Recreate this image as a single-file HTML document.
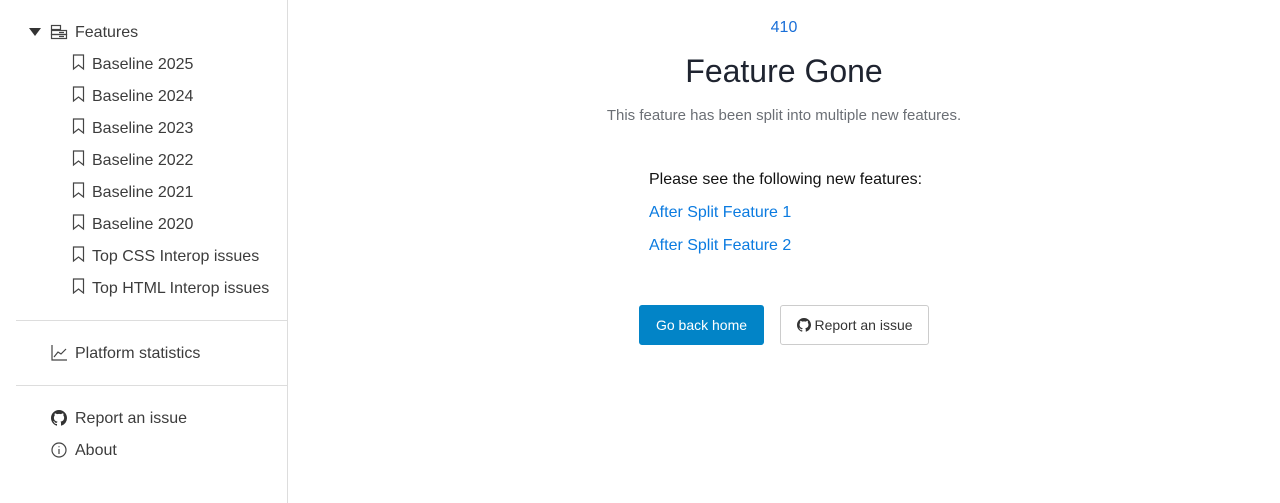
<!DOCTYPE html>
<html><head><style>
body{margin:0;width:1280px;height:503px;font-family:"Liberation Sans",sans-serif;background:#fff;position:relative;overflow:hidden;color:#333}
.a{position:absolute;white-space:nowrap}
.side{position:absolute;left:0;top:0;width:287px;height:503px;border-right:1px solid #ddd}
.s{font-size:16px;color:#3c3c3c;line-height:20px}
.hr{position:absolute;left:16px;width:271px;height:1px;background:#ddd}
svg{position:absolute}
</style></head><body>
<div class="side"></div>
<svg style="left:29px;top:28px" width="12" height="9"><path d="M0 0H12L6 8Z" fill="#333"/></svg>
<svg style="left:50px;top:24px" width="18" height="16" fill="none" stroke="#444" stroke-width="1.2"><rect x="1.5" y="1.5" width="9" height="4"/><rect x="1.5" y="6.5" width="15" height="4"/><rect x="1.5" y="10.5" width="15" height="4"/><path d="M9 8.5H14M9 12.5H14"/></svg>
<div class="a s" style="left:75px;top:23px">Features</div>
<div class="a s" style="left:92px;top:55px">Baseline 2025</div>
<div class="a s" style="left:92px;top:87px">Baseline 2024</div>
<div class="a s" style="left:92px;top:119px">Baseline 2023</div>
<div class="a s" style="left:92px;top:151px">Baseline 2022</div>
<div class="a s" style="left:92px;top:183px">Baseline 2021</div>
<div class="a s" style="left:92px;top:215px">Baseline 2020</div>
<div class="a s" style="left:92px;top:247px">Top CSS Interop issues</div>
<div class="a s" style="left:92px;top:279px">Top HTML Interop issues</div>
<svg style="left:72px;top:54px" width="14" height="240" fill="none" stroke="#444" stroke-width="1.2">
<g id="b"><path d="M1.5 1H11.5V15L6.5 11L1.5 15Z"/></g>
<use href="#b" y="32"/><use href="#b" y="64"/><use href="#b" y="96"/><use href="#b" y="128"/><use href="#b" y="160"/><use href="#b" y="192"/><use href="#b" y="224"/>
</svg>
<div class="hr" style="top:320px"></div>
<svg style="left:51px;top:345px" width="17" height="16" fill="none" stroke="#444" stroke-width="1.2"><path d="M1 0V15H16"/><path d="M3 12L7 7L10 9L15 4"/></svg>
<div class="a s" style="left:75px;top:344px">Platform statistics</div>
<div class="hr" style="top:385px"></div>
<svg style="left:51px;top:410px" width="16" height="16" viewBox="0 0 16 16"><path fill="#333" d="M8 0C3.58 0 0 3.58 0 8c0 3.54 2.29 6.53 5.47 7.59.4.07.55-.17.55-.38v-1.34c-2.23.48-2.7-1.07-2.7-1.07-.36-.92-.89-1.17-.89-1.17-.73-.5.06-.49.06-.49.8.06 1.23.83 1.23.83.72 1.23 1.87.87 2.33.67.07-.52.28-.87.51-1.07-1.78-.2-3.64-.89-3.64-3.95 0-.87.31-1.59.82-2.15-.08-.2-.36-1.02.08-2.12 0 0 .67-.21 2.2.82a7.6 7.6 0 0 1 4 0c1.53-1.04 2.2-.82 2.2-.82.44 1.1.16 1.92.08 2.12.51.56.82 1.27.82 2.15 0 3.07-1.87 3.75-3.65 3.95.29.25.54.73.54 1.48v2.2c0 .21.15.46.55.38A8.01 8.01 0 0 0 16 8c0-4.42-3.58-8-8-8z"/></svg>
<div class="a s" style="left:75px;top:409px">Report an issue</div>
<svg style="left:51px;top:442px" width="16" height="16" fill="none" stroke="#444" stroke-width="1.2"><circle cx="8" cy="8" r="7"/><path d="M8 7V12M8 4.2V5.2"/></svg>
<div class="a s" style="left:75px;top:441px">About</div>

<div class="a" style="left:288px;width:992px;text-align:center;top:19px;font-size:16px;color:#1a6fd8">410</div>
<div class="a" style="left:288px;width:992px;text-align:center;top:53px;font-size:32px;color:#1f2430">Feature Gone</div>
<div class="a" style="left:288px;width:992px;text-align:center;top:107px;font-size:15px;color:#6b6f75">This feature has been split into multiple new features.</div>
<div class="a" style="left:649px;top:171px;font-size:16px;color:#111">Please see the following new features:</div>
<div class="a" style="left:649px;top:204px;font-size:16px;color:#0b7be0">After Split Feature 1</div>
<div class="a" style="left:649px;top:237px;font-size:16px;color:#0b7be0">After Split Feature 2</div>
<div class="a" style="left:639px;top:305px;width:125px;height:40px;background:#0284c7;border-radius:3px;color:#fff;font-size:14px;line-height:40px;text-align:center">Go back home</div>
<div class="a" style="left:780px;top:305px;width:147px;height:38px;border:1px solid #ccc;border-radius:3px;color:#333;font-size:14px;line-height:38px;text-align:center"><span style="display:inline-block;width:18px"></span>Report an issue</div>
<svg style="left:797px;top:318px" width="14" height="14" viewBox="0 0 16 16"><path fill="#333" d="M8 0C3.58 0 0 3.58 0 8c0 3.54 2.290 6.53 5.47 7.59.4.07.55-.17.55-.38v-1.34c-2.23.48-2.7-1.07-2.7-1.07-.36-.92-.89-1.17-.89-1.17-.73-.5.06-.49.06-.49.8.06 1.23.83 1.23.83.72 1.23 1.87.87 2.33.67.07-.52.28-.87.51-1.07-1.78-.2-3.64-.89-3.64-3.95 0-.87.31-1.59.82-2.15-.08-.2-.36-1.02.08-2.12 0 0 .67-.21 2.2.82a7.6 7.6 0 0 1 4 0c1.53-1.04 2.2-.82 2.2-.82.44 1.1.16 1.92.08 2.12.51.56.82 1.27.82 2.15 0 3.07-1.87 3.75-3.65 3.95.29.25.54.73.54 1.48v2.2c0 .21.15.46.55.38A8.01 8.01 0 0 0 16 8c0-4.42-3.58-8-8-8z"/></svg>
</body></html>
